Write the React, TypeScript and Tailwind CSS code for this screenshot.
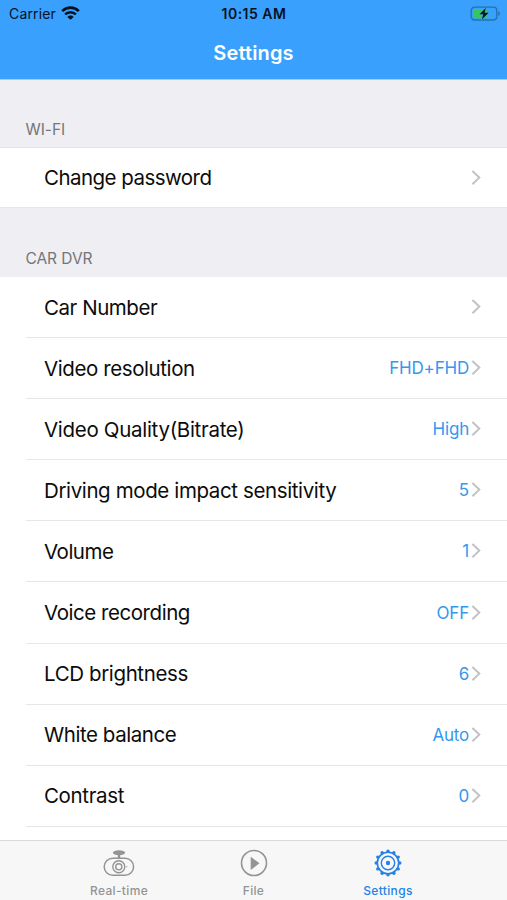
import type { ReactNode } from 'react';

type Setting = {
  label: string;
  value?: string;
  spacing?: string;
};

const settings: Setting[] = [
  { label: 'Car Number', spacing: 'tracking-[-0.45px]' },
  { label: 'Video resolution', value: 'FHD+FHD', spacing: 'tracking-[-0.41px]' },
  { label: 'Video Quality(Bitrate)', value: 'High', spacing: 'tracking-[-0.3px]' },
  { label: 'Driving mode impact sensitivity', value: '5', spacing: 'tracking-[-0.38px]' },
  { label: 'Volume', value: '1', spacing: 'tracking-[-0.5px]' },
  { label: 'Voice recording', value: 'OFF', spacing: 'tracking-[-0.45px]' },
  { label: 'LCD brightness', value: '6', spacing: 'tracking-[-0.38px]' },
  { label: 'White balance', value: 'Auto', spacing: 'tracking-[-0.44px]' },
  { label: 'Contrast', value: '0', spacing: 'tracking-[-0.35px]' },
];

const gearTeeth = Array.from({ length: 12 }, (_, i) => (i * Math.PI) / 6);

const WifiIcon = () => (
  <svg className="w-[19px] h-[14px] -mt-[2px]" viewBox="0 0 19 14" fill="none" stroke="#07121e">
    <path d="M1.2 5.1a11.8 11.8 0 0 1 16.6 0" strokeWidth="2.7" />
    <path d="M4.1 8.4a7.7 7.7 0 0 1 10.8 0" strokeWidth="2.5" />
    <path d="M9.5 13.8 6.3 10.9a4.5 4.5 0 0 1 6.4 0Z" fill="#07121e" stroke="none" />
  </svg>
);

const BatteryIcon = () => (
  <svg className="w-[31px] h-[16px] -mt-px" viewBox="0 0 31 16">
    <rect x="1.2" y="1.2" width="25.6" height="12.8" rx="3.4" fill="none" stroke="#2370ad" strokeWidth="1.3" />
    <path d="M28.3 5.3c2.1.7 2.1 3.9 0 4.6Z" fill="#2370ad" />
    <rect x="3" y="3" width="14.5" height="9.2" rx="1.6" fill="#35c759" />
    <path
      d="M15.8 1.9 9.6 8.2h3.7l-1.4 5.3 6.6-6.7h-4Z"
      fill="#06121c"
      stroke="#39a0fe"
      strokeWidth="0.8"
      paintOrder="stroke"
    />
  </svg>
);

const Chevron = () => (
  <svg className="w-[10px] h-[16px] ml-[2px]" viewBox="0 0 10 16" fill="none">
    <path d="M1.4 1 8.3 7.6l-6.9 6.6" stroke="#c2c2c6" strokeWidth="2" />
  </svg>
);

const CameraIcon = () => (
  <svg className="w-8 h-7" viewBox="0 0 32 28" fill="none" stroke="#949494">
    <rect x="1.2" y="9.2" width="29.4" height="17" rx="8.5" strokeWidth="1.5" />
    <ellipse cx="16" cy="3.7" rx="6.1" ry="2.5" fill="#949494" stroke="none" />
    <path d="M16 4.5v5" strokeWidth="2.4" />
    <circle cx="15.8" cy="17.8" r="6" strokeWidth="1.4" />
    <circle cx="15.8" cy="17.8" r="3.1" strokeWidth="1.4" />
    <circle cx="23.8" cy="17.7" r="0.8" fill="#b8b8b8" stroke="none" />
  </svg>
);

const PlayIcon = () => (
  <svg className="w-7 h-7" viewBox="0 0 28 28" fill="none">
    <circle cx="14" cy="14" r="12.5" stroke="#949494" strokeWidth="1.6" />
    <path d="M10.7 7.7v13.2l8.8-6.6Z" fill="#949494" />
  </svg>
);

const GearIcon = () => (
  <svg className="w-7 h-7" viewBox="0 0 28 28" fill="none" stroke="#2680e5">
    <circle cx="14" cy="14" r="10.7" strokeWidth="1.6" />
    <circle cx="14" cy="14" r="6.7" strokeWidth="1.4" />
    <circle cx="14" cy="14" r="2.2" fill="#2680e5" stroke="none" />
    {gearTeeth.map((angle) => (
      <circle
        key={angle}
        cx={14 + 11.8 * Math.sin(angle)}
        cy={14 - 11.8 * Math.cos(angle)}
        r="1.7"
        fill="#2680e5"
        stroke="none"
      />
    ))}
  </svg>
);

const SectionTitle = ({ children }: { children: ReactNode }) => (
  <h2 className="pl-[25.5px] text-[15.5px] leading-5 tracking-[-0.05px] text-[#75757a]">
    {children}
  </h2>
);

const Row = ({ label, value, spacing = '' }: Setting) => (
  <div className="flex flex-1 items-center justify-between pr-[26px]">
    <span className={`pt-px text-[20.5px] leading-7 text-[#0c0c0c] ${spacing}`}>{label}</span>
    <span className="flex items-center text-[17px] leading-6 tracking-[-0.2px] text-[#3398ef]">
      {value}
      <Chevron />
    </span>
  </div>
);

const Tab = ({ icon, label, active }: { icon: ReactNode; label: string; active?: boolean }) => (
  <button
    className={`flex flex-1 flex-col items-center pt-[8px] text-[12px] font-medium leading-4 tracking-[0.35px] ${
      active ? 'text-[#2680e5]' : 'text-[#949494]'
    }`}
  >
    {icon}
    <span className="mt-[6px]">{label}</span>
  </button>
);

const App = () => {
  return (
    <div className="flex h-[900px] w-[507px] flex-col overflow-hidden bg-white font-['Inter',sans-serif]">
      <header className="h-[80px] shrink-0 border-b border-[#a5cdf2] bg-[#39a0fe]">
        <div className="grid h-7 grid-cols-3 items-center pl-[9px] pr-[6px] text-[14px] text-[#07121e]">
          <div className="flex items-center gap-[5px]">
            <span className="-mt-px tracking-[0.15px]">Carrier</span>
            <WifiIcon />
          </div>
          <span className="-mt-px -ml-[2px] text-center font-semibold tracking-[0.5px]">
            10:15 AM
          </span>
          <div className="flex justify-end">
            <BatteryIcon />
          </div>
        </div>
        <h1 className="pt-[11px] text-center text-[20px] font-semibold leading-7 tracking-[0.15px] text-white">
          Settings
        </h1>
      </header>

      <main className="flex min-h-0 flex-1 flex-col overflow-hidden">
        <section className="shrink-0">
          <div className="h-[68px] border-b border-[#e4e4e7] bg-[#eeeef3] pt-[40px]">
            <SectionTitle>WI-FI</SectionTitle>
          </div>
          <div className="flex h-[60px] border-b border-[#e7e7ea] pl-[44px]">
            <Row label="Change password" spacing="tracking-[-0.54px]" />
          </div>
        </section>
        <section className="shrink-0">
          <div className="h-[69px] bg-[#eeeef3] pt-[41px]">
            <SectionTitle>CAR DVR</SectionTitle>
          </div>
          {settings.map((setting) => (
            <div
              key={setting.label}
              className="ml-[26px] flex h-[61.1px] border-b border-[#e7e7e9] pl-[18px]"
            >
              <Row {...setting} />
            </div>
          ))}
        </section>
      </main>

      <nav className="flex h-[60px] shrink-0 border-t border-[#d9d9d9] bg-[#f7f7f7] px-[51.75px]">
        <Tab icon={<CameraIcon />} label="Real-time" />
        <Tab icon={<PlayIcon />} label="File" />
        <Tab icon={<GearIcon />} label="Settings" active />
      </nav>
    </div>
  );
};

export default App;
